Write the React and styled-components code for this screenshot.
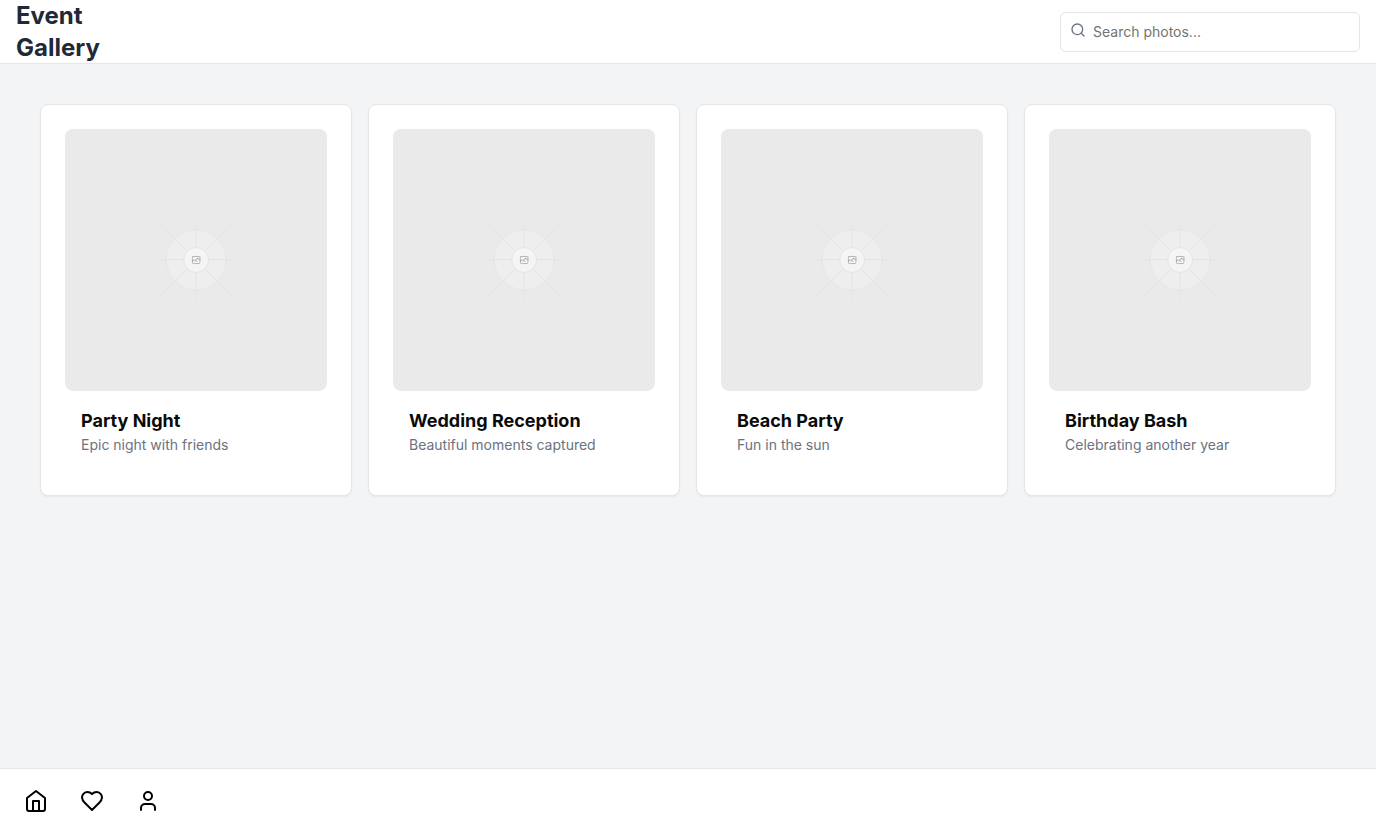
import React, { useId, useState } from "react";
import styled, { createGlobalStyle } from "styled-components";

const GlobalStyle = createGlobalStyle`
  *, *::before, *::after { box-sizing: border-box; }
  body {
    margin: 0;
    background: #f3f4f6;
    color: #0a0a0a;
    font-family: Inter, "Liberation Sans", sans-serif;
    font-size: 16px;
    line-height: 24px;
  }
`;

const Page = styled.div`
  display: flex;
  flex-direction: column;
  min-height: 100vh;
`;

const Header = styled.header`
  display: flex;
  align-items: center;
  justify-content: space-between;
  height: 64px;
  padding: 0 16px;
  background: #fff;
  border-bottom: 1px solid #e5e7eb;
`;

const Title = styled.h1`
  margin: 0;
  max-width: 120px;
  font-size: 24px;
  line-height: 32px;
  font-weight: 700;
  color: #1f2937;
`;

const SearchBox = styled.div`
  position: relative;
  width: 300px;
`;

const SearchIcon = styled.svg`
  position: absolute;
  left: 10px;
  top: 10px;
  color: #6b7280;
  pointer-events: none;
`;

const SearchInput = styled.input`
  display: block;
  width: 100%;
  height: 40px;
  padding: 8px 12px 8px 32px;
  border: 1px solid #e5e5e5;
  border-radius: 6px;
  background: #fff;
  color: inherit;
  font-family: inherit;
  font-size: 14px;
  line-height: 20px;
  &::placeholder { color: #737373; opacity: 1; }
`;

const Main = styled.main`
  flex: 1;
  padding: 40px;
`;

const Grid = styled.div`
  display: grid;
  grid-template-columns: repeat(4, minmax(0, 1fr));
  gap: 16px;
`;

const Card = styled.article`
  padding: 24px;
  background: #fff;
  border: 1px solid #e5e5e5;
  border-radius: 8px;
  box-shadow: 0 1px 2px rgba(0, 0, 0, 0.05);
`;

const Picture = styled.svg`
  display: block;
  width: 100%;
  height: auto;
  aspect-ratio: 1;
  border-radius: 8px;
`;

const CardBody = styled.div`
  padding: 16px;
`;

const CardTitle = styled.h2`
  margin: 0;
  font-size: 18px;
  line-height: 28px;
  font-weight: 700;
`;

const CardText = styled.p`
  margin: 0;
  font-size: 14px;
  line-height: 20px;
  color: #6b7280;
`;

const BottomNav = styled.nav`
  display: flex;
  align-items: center;
  gap: 16px;
  height: 64px;
  padding: 0 16px;
  background: #fff;
  border-top: 1px solid #e5e7eb;
`;

const NavButton = styled.button`
  display: flex;
  align-items: center;
  justify-content: center;
  width: 40px;
  height: 40px;
  padding: 0;
  border: 0;
  border-radius: 6px;
  background: transparent;
  color: #000;
  cursor: pointer;
`;

const strokeProps = {
  viewBox: "0 0 24 24",
  fill: "none",
  stroke: "currentColor",
  strokeWidth: 2,
  strokeLinecap: "round",
  strokeLinejoin: "round",
  "aria-hidden": true,
};

const OUTER =
  "M600.709 736.5c-75.454 0-136.621-61.167-136.621-136.62 0-75.454 61.167-136.621 136.621-136.621 75.453 0 136.62 61.167 136.62 136.621 0 75.453-61.167 136.62-136.62 136.62Z";

function Placeholder({ label }) {
  const id = useId();
  const rays = [
    { d: "M0-1.209h553.581", transform: "scale(1 -1) rotate(45 1163.11 91.165)", g: [554.061, -0.48, 0.083, 0.087] },
    { d: "M404.846 598.671h391.726", g: [796.912, 404.507, 599.963, 599.965] },
    { d: "M599.5 795.742V404.017", g: [600.792, 600.794, 403.677, 796.082] },
    { d: "m795.717 796.597-391.441-391.44", g: [404.85, 796.972, 403.903, 796.02] },
  ];
  return (
    <Picture viewBox="0 0 1200 1200" fill="none" role="img" aria-label={label}>
      <defs>
        {rays.map(({ g }, i) => (
          <linearGradient key={i} id={`${id}-${i}`} x1={g[0]} x2={g[1]} y1={g[2]} y2={g[3]} gradientUnits="userSpaceOnUse">
            <stop stopColor="#C9C9C9" stopOpacity="0" />
            <stop offset=".208" stopColor="#C9C9C9" />
            <stop offset=".792" stopColor="#C9C9C9" />
            <stop offset="1" stopColor="#C9C9C9" stopOpacity="0" />
          </linearGradient>
        ))}
      </defs>
      <rect width="1200" height="1200" fill="#EAEAEA" rx="3" />
      <g opacity=".5">
        <g opacity=".5">
          <path fill="#FAFAFA" d={OUTER} />
          <path stroke="#C9C9C9" strokeWidth="2.418" d={OUTER} />
        </g>
        {rays.map(({ d, transform }, i) => (
          <path key={i} d={d} transform={transform} stroke={`url(#${id}-${i})`} strokeWidth="2.418" />
        ))}
        <circle cx="600.709" cy="599.88" r="56.825" fill="#fff" />
        <path
          fill="#666"
          fillRule="evenodd"
          clipRule="evenodd"
          d="M616.426 586.58h-31.434v16.176l3.553-3.554.531-.531h9.068l.074-.074 8.463-8.463h2.565l7.18 7.181V586.58Zm-15.715 14.654 3.698 3.699 1.283 1.282-2.565 2.565-1.282-1.283-5.2-5.199h-6.066l-5.514 5.514-.073.073v2.876a2.418 2.418 0 0 0 2.418 2.418h26.598a2.418 2.418 0 0 0 2.418-2.418v-8.317l-8.463-8.463-7.181 7.181-.071.072Zm-19.347 5.442v4.085a6.045 6.045 0 0 0 6.046 6.045h26.598a6.044 6.044 0 0 0 6.045-6.045v-7.108l1.356-1.355-1.282-1.283-.074-.073v-17.989h-38.689v23.43l-.146.146.146.147Z"
        />
        <circle cx="600.709" cy="599.88" r="56.825" stroke="#C9C9C9" strokeWidth="2.418" />
      </g>
    </Picture>
  );
}

const events = [
  { title: "Party Night", text: "Epic night with friends" },
  { title: "Wedding Reception", text: "Beautiful moments captured" },
  { title: "Beach Party", text: "Fun in the sun" },
  { title: "Birthday Bash", text: "Celebrating another year" },
];

export default function App() {
  const [query, setQuery] = useState("");
  const shown = events.filter(({ title, text }) =>
    `${title} ${text}`.toLowerCase().includes(query.toLowerCase())
  );
  return (
    <Page>
      <GlobalStyle />
      <Header>
        <Title>Event Gallery</Title>
        <SearchBox>
          <SearchInput
            type="search"
            aria-label="Search photos"
            placeholder="Search photos..."
            value={query}
            onChange={(e) => setQuery(e.target.value)}
          />
          <SearchIcon {...strokeProps} width="16" height="16">
            <circle cx="11" cy="11" r="8" />
            <path d="m21 21-4.3-4.3" />
          </SearchIcon>
        </SearchBox>
      </Header>
      <Main>
        <Grid>
          {shown.map(({ title, text }) => (
            <Card key={title}>
              <Placeholder label={title} />
              <CardBody>
                <CardTitle>{title}</CardTitle>
                <CardText>{text}</CardText>
              </CardBody>
            </Card>
          ))}
        </Grid>
      </Main>
      <BottomNav aria-label="Main">
        <NavButton type="button" aria-label="Home">
          <svg {...strokeProps} width="24" height="24">
            <path d="m3 9 9-7 9 7v11a2 2 0 0 1-2 2H5a2 2 0 0 1-2-2z" />
            <polyline points="9 22 9 12 15 12 15 22" />
          </svg>
        </NavButton>
        <NavButton type="button" aria-label="Favorites">
          <svg {...strokeProps} width="24" height="24">
            <path d="M19 14c1.49-1.46 3-3.21 3-5.5A5.5 5.5 0 0 0 16.5 3c-1.76 0-3 .5-4.5 2-1.5-1.5-2.74-2-4.5-2A5.5 5.5 0 0 0 2 8.5c0 2.3 1.5 4.05 3 5.5l7 7Z" />
          </svg>
        </NavButton>
        <NavButton type="button" aria-label="Profile">
          <svg {...strokeProps} width="24" height="24">
            <path d="M19 21v-2a4 4 0 0 0-4-4H9a4 4 0 0 0-4 4v2" />
            <circle cx="12" cy="7" r="4" />
          </svg>
        </NavButton>
      </BottomNav>
    </Page>
  );
}
